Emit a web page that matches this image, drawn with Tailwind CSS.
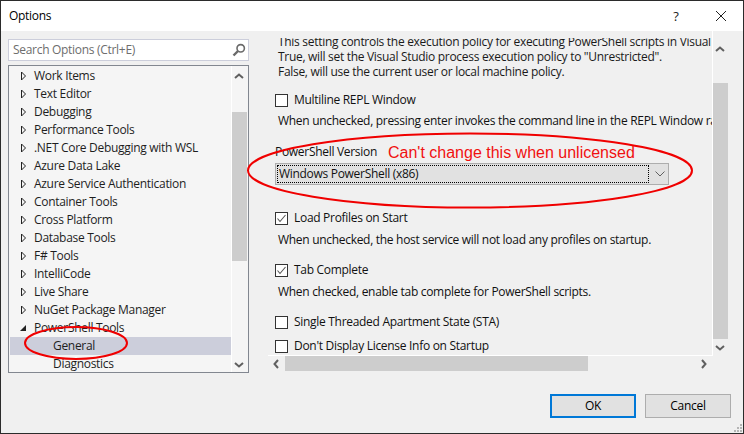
<!DOCTYPE html>
<html>
<head>
<meta charset="utf-8">
<script src="https://cdn.jsdelivr.net/npm/@tailwindcss/browser@4"></script>
</head>
<body class="bg-[#f0f0f0]">
<div class="relative w-[744px] h-[434px] overflow-hidden flex flex-col bg-[#f0f0f0] border border-[#2b2b2b] font-['Open_Sans',sans-serif] text-[12px] leading-[16px] tracking-[-0.3px] text-[#111]">
  <!-- title bar -->
  <div class="h-[30px] shrink-0 bg-white flex items-center pl-[8px]">
    <span class="flex-1 text-[12px] text-black">Options</span>
    <span class="w-[12px] text-center text-[13px] mr-[33px] text-[#222]">?</span>
    <svg class="mr-[16px]" width="12" height="12" viewBox="0 0 12 12"><path d="M1 1L11 11M11 1L1 11" stroke="#222" stroke-width="1" fill="none"/></svg>
  </div>
  <!-- body -->
  <div class="flex h-[341px] shrink-0">
    <!-- left column -->
    <div class="w-[241px] ml-[7px] shrink-0 flex flex-col pt-[8px]">
      <div class="h-[22px] shrink-0 bg-white border border-[#cccedb] flex items-center pl-[4px] pr-[2px] text-[#6d6d6d]">
        <span class="flex-1">Search Options (Ctrl+E)</span>
        <svg width="14" height="14" viewBox="0 0 14 14"><circle cx="8.7" cy="5.3" r="3.7" fill="none" stroke="#6a6a6a" stroke-width="1.6"/><path d="M6 8L1.5 12.5" stroke="#6a6a6a" stroke-width="2.4" fill="none"/></svg>
      </div>
      <div class="mt-[4px] h-[308px] shrink-0 border border-[#828790] bg-[#f5f5f5] flex overflow-hidden">
        <div class="w-[223px] shrink-0 border-r border-white pt-[1px] pl-[1px] overflow-hidden text-[#1e1e1e]">
          <div class="h-[18px] flex items-center pl-[10px]"><svg class="mr-[7px]" width="7" height="10" viewBox="0 0 7 10"><path d="M1.5 1L5.5 5L1.5 9Z" fill="none" stroke="#222"/></svg>Work Items</div>
          <div class="h-[18px] flex items-center pl-[10px]"><svg class="mr-[7px]" width="7" height="10" viewBox="0 0 7 10"><path d="M1.5 1L5.5 5L1.5 9Z" fill="none" stroke="#222"/></svg>Text Editor</div>
          <div class="h-[18px] flex items-center pl-[10px]"><svg class="mr-[7px]" width="7" height="10" viewBox="0 0 7 10"><path d="M1.5 1L5.5 5L1.5 9Z" fill="none" stroke="#222"/></svg>Debugging</div>
          <div class="h-[18px] flex items-center pl-[10px]"><svg class="mr-[7px]" width="7" height="10" viewBox="0 0 7 10"><path d="M1.5 1L5.5 5L1.5 9Z" fill="none" stroke="#222"/></svg>Performance Tools</div>
          <div class="h-[18px] flex items-center pl-[10px]"><svg class="mr-[7px]" width="7" height="10" viewBox="0 0 7 10"><path d="M1.5 1L5.5 5L1.5 9Z" fill="none" stroke="#222"/></svg>.NET Core Debugging with WSL</div>
          <div class="h-[18px] flex items-center pl-[10px]"><svg class="mr-[7px]" width="7" height="10" viewBox="0 0 7 10"><path d="M1.5 1L5.5 5L1.5 9Z" fill="none" stroke="#222"/></svg>Azure Data Lake</div>
          <div class="h-[18px] flex items-center pl-[10px]"><svg class="mr-[7px]" width="7" height="10" viewBox="0 0 7 10"><path d="M1.5 1L5.5 5L1.5 9Z" fill="none" stroke="#222"/></svg>Azure Service Authentication</div>
          <div class="h-[18px] flex items-center pl-[10px]"><svg class="mr-[7px]" width="7" height="10" viewBox="0 0 7 10"><path d="M1.5 1L5.5 5L1.5 9Z" fill="none" stroke="#222"/></svg>Container Tools</div>
          <div class="h-[18px] flex items-center pl-[10px]"><svg class="mr-[7px]" width="7" height="10" viewBox="0 0 7 10"><path d="M1.5 1L5.5 5L1.5 9Z" fill="none" stroke="#222"/></svg>Cross Platform</div>
          <div class="h-[18px] flex items-center pl-[10px]"><svg class="mr-[7px]" width="7" height="10" viewBox="0 0 7 10"><path d="M1.5 1L5.5 5L1.5 9Z" fill="none" stroke="#222"/></svg>Database Tools</div>
          <div class="h-[18px] flex items-center pl-[10px]"><svg class="mr-[7px]" width="7" height="10" viewBox="0 0 7 10"><path d="M1.5 1L5.5 5L1.5 9Z" fill="none" stroke="#222"/></svg>F# Tools</div>
          <div class="h-[18px] flex items-center pl-[10px]"><svg class="mr-[7px]" width="7" height="10" viewBox="0 0 7 10"><path d="M1.5 1L5.5 5L1.5 9Z" fill="none" stroke="#222"/></svg>IntelliCode</div>
          <div class="h-[18px] flex items-center pl-[10px]"><svg class="mr-[7px]" width="7" height="10" viewBox="0 0 7 10"><path d="M1.5 1L5.5 5L1.5 9Z" fill="none" stroke="#222"/></svg>Live Share</div>
          <div class="h-[18px] flex items-center pl-[10px]"><svg class="mr-[7px]" width="7" height="10" viewBox="0 0 7 10"><path d="M1.5 1L5.5 5L1.5 9Z" fill="none" stroke="#222"/></svg>NuGet Package Manager</div>
          <div class="h-[18px] flex items-center pl-[10px]"><svg class="mr-[7px]" width="7" height="10" viewBox="0 0 7 10"><path d="M6 2V8H0Z" fill="#222"/></svg>PowerShell Tools</div>
          <div class="h-[18px] flex items-center pl-[43px] bg-[#cccedb]">General</div>
          <div class="h-[18px] flex items-center pl-[43px]">Diagnostics</div>
        </div>
        <div class="flex-1 relative">
          <svg class="absolute left-[2px] top-[7px]" width="10" height="6" viewBox="0 0 10 6"><path d="M1 5L5 1.5L9 5" fill="none" stroke="#606060" stroke-width="2"/></svg>
          <div class="absolute left-0 w-[15px] top-[46px] h-[149px] bg-[#cdcdcd]"></div>
          <svg class="absolute left-[2px] bottom-[4px]" width="10" height="6" viewBox="0 0 10 6"><path d="M1 1L5 4.5L9 1" fill="none" stroke="#606060" stroke-width="2"/></svg>
        </div>
      </div>
    </div>
    <!-- right column -->
    <div class="w-[460px] ml-[19px] shrink-0 flex flex-col">
      <div class="flex h-[325px]">
        <div class="w-[445px] shrink-0 border-r border-b border-white pt-[7px] pl-[7px]">
          <div class="h-[317px] overflow-hidden whitespace-nowrap">
            <div class="-mt-[4px] leading-[15px] text-[#1a1a1a]">
              <div class="h-[15px] pl-[3px]">This setting controls the execution policy for executing PowerShell scripts in Visual</div>
              <div class="h-[15px] pl-[3px]">True, will set the Visual Studio process execution policy to "Unrestricted".</div>
              <div class="h-[15px] pl-[3px]">False, will use the current user or local machine policy.</div>
            </div>
            <div class="mt-[13px] h-[16px] flex items-center gap-[6px]"><span class="w-[13px] h-[13px] bg-white border border-[#333]"></span>Multiline REPL Window</div>
            <div class="mt-[5px] h-[16px] pl-[3px]">When unchecked, pressing enter invokes the command line in the REPL Window rather than inserting a new line.</div>
            <div class="mt-[15px] h-[16px]">PowerShell Version</div>
            <div class="mt-[3px] w-[394px] h-[22px] bg-[#e1e1e1] border border-[#adadad] flex items-center p-[1px]">
              <span class="h-[18px] w-[372px] border border-dotted border-black flex items-center pl-[1px]">Windows PowerShell (x86)</span>
              <svg class="ml-[6px]" width="10" height="6" viewBox="0 0 10 6"><path d="M0.5 0.5L5 5L9.5 0.5" fill="none" stroke="#606060"/></svg>
            </div>
            <div class="mt-[25px] h-[16px] flex items-center gap-[6px]"><span class="w-[13px] h-[13px] bg-white border border-[#333] flex items-center justify-center"><svg width="11" height="11" viewBox="0 0 11 11"><path d="M1.5 5.5L4 8.5L9.5 2" fill="none" stroke="#555" stroke-width="1.1"/></svg></span>Load Profiles on Start</div>
            <div class="mt-[6px] h-[16px] pl-[3px]">When unchecked, the host service will not load any profiles on startup.</div>
            <div class="mt-[14px] h-[16px] flex items-center gap-[6px]"><span class="w-[13px] h-[13px] bg-white border border-[#333] flex items-center justify-center"><svg width="11" height="11" viewBox="0 0 11 11"><path d="M1.5 5.5L4 8.5L9.5 2" fill="none" stroke="#555" stroke-width="1.1"/></svg></span>Tab Complete</div>
            <div class="mt-[6px] h-[16px] pl-[3px]">When checked, enable tab complete for PowerShell scripts.</div>
            <div class="mt-[14px] h-[16px] flex items-center gap-[6px]"><span class="w-[13px] h-[13px] bg-white border border-[#333]"></span>Single Threaded Apartment State (STA)</div>
            <div class="mt-[8px] h-[16px] flex items-center gap-[6px]"><span class="w-[13px] h-[13px] bg-white border border-[#333]"></span>Don't Display License Info on Startup</div>
          </div>
        </div>
        <div class="w-[15px] shrink-0 relative">
          <svg class="absolute left-[2px] top-[15px]" width="10" height="6" viewBox="0 0 10 6"><path d="M1 5L5 1.5L9 5" fill="none" stroke="#606060" stroke-width="2"/></svg>
          <div class="absolute left-0 w-[15px] top-[52px] h-[256px] bg-[#cdcdcd]"></div>
          <svg class="absolute left-[2px] top-[314px]" width="10" height="6" viewBox="0 0 10 6"><path d="M1 1L5 4.5L9 1" fill="none" stroke="#606060" stroke-width="2"/></svg>
        </div>
      </div>
      <div class="h-[15px] w-[445px] shrink-0 flex items-center">
        <svg class="ml-[5px]" width="6" height="10" viewBox="0 0 6 10"><path d="M5 1L1.5 5L5 9" fill="none" stroke="#606060" stroke-width="2"/></svg>
        <div class="ml-[6px] w-[303px] h-[15px] bg-[#cdcdcd]"></div>
        <svg class="ml-[113px]" width="6" height="10" viewBox="0 0 6 10"><path d="M1 1L4.5 5L1 9" fill="none" stroke="#606060" stroke-width="2"/></svg>
      </div>
    </div>
  </div>
  <!-- buttons -->
  <div class="flex justify-end gap-[9px] pr-[12px] mt-[22px]">
    <div class="w-[86px] h-[24px] bg-[#e1e1e1] border-2 border-[#0078d7] flex items-center justify-center text-black">OK</div>
    <div class="w-[86px] h-[24px] bg-[#e1e1e1] border border-[#adadad] flex items-center justify-center text-black">Cancel</div>
  </div>
  <!-- grip -->
  <svg class="absolute right-0 bottom-0" width="10" height="10" viewBox="0 0 10 10" fill="#b5b5b5"><rect x="7" y="1" width="2" height="2"/><rect x="4" y="4" width="2" height="2"/><rect x="7" y="4" width="2" height="2"/><rect x="1" y="7" width="2" height="2"/><rect x="4" y="7" width="2" height="2"/><rect x="7" y="7" width="2" height="2"/></svg>
  <!-- annotations -->
  <svg class="absolute left-[-1px] top-[-1px] pointer-events-none" width="744" height="434" viewBox="0 0 744 434">
    <ellipse cx="470" cy="170.5" rx="222" ry="37" fill="none" stroke="#f00000" stroke-width="2"/>
    <ellipse cx="76" cy="343" rx="51" ry="16" fill="none" stroke="#f00000" stroke-width="2"/>
  </svg>
  <div class="absolute left-[387px] top-[143px] font-['Liberation_Sans',sans-serif] text-[16px] leading-[18px] tracking-normal text-[#f01010] whitespace-nowrap">Can't change this when unlicensed</div>
</div>
</body>
</html>
